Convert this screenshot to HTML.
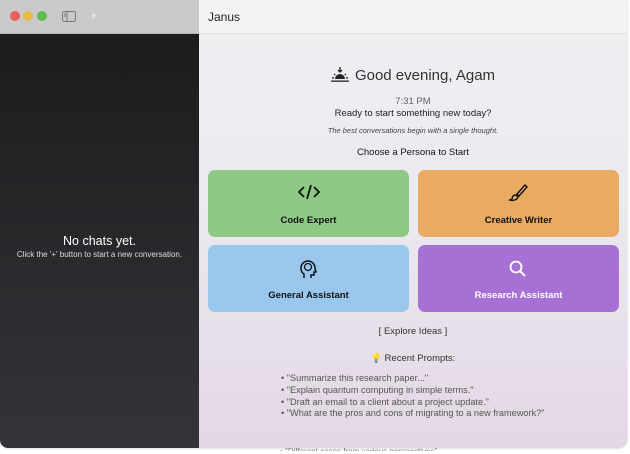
<!DOCTYPE html>
<html><head><meta charset="utf-8"><style>
*{margin:0;padding:0;box-sizing:border-box}
body{width:630px;height:454px;background:#fff;font-family:"Liberation Sans",sans-serif;position:relative;overflow:hidden}
.win{position:absolute;left:0;top:0;width:627px;height:448px;border-radius:0 0 8px 8px;overflow:hidden;box-shadow:0 0 2px rgba(0,0,0,.25)}
.sbtop{position:absolute;left:0;top:0;width:199px;height:34px;background:#c9c9cb;border-bottom:1px solid #b8b8ba}
.side{position:absolute;left:0;top:34px;width:199px;height:414px;background:linear-gradient(#1c1c1e,#2f3033 80%,#333437)}
.main{position:absolute;left:199px;top:0;right:0;bottom:0;background:linear-gradient(#efeff2 10%,#ebe8ef 50%,#e3d7e4)}
.mtop{position:absolute;left:0;top:0;right:0;height:34px;background:#f3f3f5;border-bottom:1px solid #dcdcde;font-size:12px;color:#222;padding:10px 0 0 9px}
.dot{position:absolute;top:11px;width:10px;height:10px;border-radius:50%}
.c{position:absolute;left:0;right:0;text-align:center}
.card{position:absolute;width:201px;height:67px;border-radius:7px;text-align:center;font-size:9.5px;font-weight:bold}
.card span{position:absolute;left:0;right:0;top:45px}
.card svg{position:absolute;left:90px;top:14px}
.pr{position:absolute;left:82px;font-size:9.2px;color:#555}
</style></head><body>
<div class="win">
<div class="sbtop">
<div class="dot" style="left:10px;background:#e9605a"></div>
<div class="dot" style="left:23px;background:#e7bc45"></div>
<div class="dot" style="left:37px;background:#5fbd4c"></div>
<svg style="position:absolute;left:62px;top:11px" width="14" height="11" viewBox="0 0 14 11"><rect x="0.5" y="0.5" width="13" height="10" rx="2" fill="none" stroke="#777"/><line x1="5" y1="1" x2="5" y2="10" stroke="#777"/><line x1="2" y1="3" x2="4" y2="3" stroke="#777"/><line x1="2" y1="5" x2="4" y2="5" stroke="#777"/></svg>
<div style="position:absolute;left:90px;top:8px;color:#eee;font-size:13px">+</div>
</div>
<div class="side">
<div class="c" style="top:200px;color:#fff;font-size:12.5px;font-weight:500">No chats yet.</div>
<div class="c" style="top:216px;color:#ddd;font-size:8px">Click the '+' button to start a new conversation.</div>
</div>
<div class="main">
<div class="mtop">Janus</div>
<div class="c" style="top:66px;font-size:15px;color:#333"><svg width="18" height="16" viewBox="0 0 18 16" style="vertical-align:-2px;margin-right:6px"><path d="M9 1v5M7 4l2 2 2-2" stroke="#222" fill="none" stroke-width="1.3"/><path d="M4 13a5 5 0 0 1 10 0z" fill="#222"/><rect x="0" y="14.5" width="18" height="1.3" fill="#222"/><path d="M1 12h2M15 12h2M3 8l1.3 1M15 8l-1.3 1" stroke="#222" stroke-width="1.2"/></svg>Good evening, Agam</div>
<div class="c" style="top:96px;font-size:9.5px;color:#666">7:31 PM</div>
<div class="c" style="top:108px;font-size:9.5px;color:#222">Ready to start something new today?</div>
<div class="c" style="top:126px;font-size:7.5px;color:#444;font-style:italic">The best conversations begin with a single thought.</div>
<div class="c" style="top:147px;font-size:9.5px;color:#111">Choose a Persona to Start</div>
<div class="card" style="left:9px;top:170px;background:#8fc985;color:#111"><svg width="22" height="16" viewBox="0 0 22 16"><path d="M6 3L1 8l5 5M16 3l5 5-5 5M13 1L9 15" stroke="#111" stroke-width="1.8" fill="none"/></svg><span>Code Expert</span></div>
<div class="card" style="left:219px;top:170px;background:#e9aa62;color:#111"><svg width="20" height="18" viewBox="0 0 20 18"><path d="M17 1L9 10l2 2 8-9z" stroke="#111" stroke-width="1.4" fill="none"/><path d="M8 11c-3 0-4 2-4 4-1 1-2 1-3 1 4 1 8 0 9-3z" stroke="#111" stroke-width="1.4" fill="none"/></svg><span>Creative Writer</span></div>
<div class="card" style="left:9px;top:245px;background:#99c7ee;color:#111"><svg width="20" height="20" viewBox="0 0 20 20"><path d="M6 19v-4c-2-1-3-3-3-6a7 7 0 0 1 14 0c0 2 1 3 1 4h-2v3h-3v3" stroke="#111" stroke-width="1.5" fill="none"/><circle cx="10" cy="8" r="3.5" stroke="#111" stroke-width="1.2" fill="none"/></svg><span>General Assistant</span></div>
<div class="card" style="left:219px;top:245px;background:#a670d4;color:#fff"><svg width="20" height="20" viewBox="0 0 20 20"><circle cx="8" cy="8" r="5.5" stroke="#fff" stroke-width="1.8" fill="none"/><path d="M12 12l5 5" stroke="#fff" stroke-width="2"/></svg><span>Research Assistant</span></div>
<div class="c" style="top:326px;font-size:9.5px;color:#333">[ Explore Ideas ]</div>
<div class="c" style="top:353px;font-size:9.5px;color:#333"><span style="font-size:9px">💡</span> Recent Prompts:</div>
<div class="pr" style="top:373px">• "Summarize this research paper..."</div>
<div class="pr" style="top:385px">• "Explain quantum computing in simple terms."</div>
<div class="pr" style="top:397px">• "Draft an email to a client about a project update."</div>
<div class="pr" style="top:408px">• "What are the pros and cons of migrating to a new framework?"</div>
</div>
</div>
<div style="position:absolute;left:280px;top:448px;font-size:8px;color:#777;height:3px;overflow:hidden;line-height:1">• "Different cases from various perspectives"</div>
</body></html>
